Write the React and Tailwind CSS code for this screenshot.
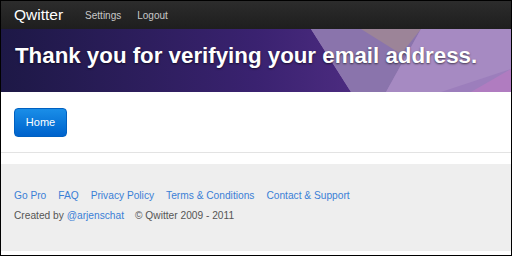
import React from "react";

export default function App() {
  return (
    <div className="w-[512px] h-[256px] overflow-hidden bg-black p-px font-['Liberation_Sans',Arial,sans-serif]">
      <div className="flex h-full flex-col bg-white">
        <nav className="flex h-[28px] items-center bg-gradient-to-b from-[#2c2c2c] to-[#1e1e1e] pl-[13px]">
          <span className="text-[15.5px] leading-none text-white">Qwitter</span>
          <span className="ml-[22px] text-[10px] text-[#c8c8c8]">Settings</span>
          <span className="ml-[16px] text-[10px] text-[#c8c8c8]">Logout</span>
        </nav>
        <div className="relative flex h-[63px] items-start overflow-hidden bg-gradient-to-r from-[#1d1846] via-[#3a2270] to-[#6a3a9a] pl-[14px] pt-[16px]">
          <svg className="absolute inset-0" width="510" height="63" viewBox="0 0 510 63" preserveAspectRatio="none">
            <polygon points="310,0 510,0 510,63 350,63" fill="#9c7ebc" />
            <polygon points="310,0 420,0 385,63 350,63" fill="#8a74ac" />
            <polygon points="360,0 420,0 400,25" fill="#9c8498" />
            <polygon points="420,0 510,0 510,40 440,63 385,63" fill="#a68ac2" />
            <polygon points="470,63 510,40 510,63" fill="#b07cc0" />
          </svg>
          <h1 className="relative text-[22.3px] font-bold leading-none text-white [text-shadow:0_1px_2px_rgba(0,0,0,0.6)]">
            Thank you for verifying your email address.
          </h1>
        </div>
        <div className="flex h-[61px] items-start border-b border-[#e3e3e3] pl-[13px] pt-[16px]">
          <button className="h-[29px] w-[53px] rounded-[4px] border border-[#0060c0] bg-gradient-to-b from-[#1a8ee8] to-[#0062cc] text-[11px] text-white">
            Home
          </button>
        </div>
        <div className="h-[11px] bg-white" />
        <footer className="flex h-[87px] flex-col bg-[#eeeeee] pl-[13px] pt-[26px] text-[10.2px] leading-[12px]">
          <div className="flex gap-[12px] text-[#3a7fd6]">
            <span>Go Pro</span>
            <span>FAQ</span>
            <span>Privacy Policy</span>
            <span>Terms &amp; Conditions</span>
            <span>Contact &amp; Support</span>
          </div>
          <div className="mt-[8px] flex text-[#555]">
            <span>
              Created by <span className="text-[#3a7fd6]">@arjenschat</span>
            </span>
            <span className="ml-[11px]">© Qwitter 2009 - 2011</span>
          </div>
        </footer>
      </div>
    </div>
  );
}
